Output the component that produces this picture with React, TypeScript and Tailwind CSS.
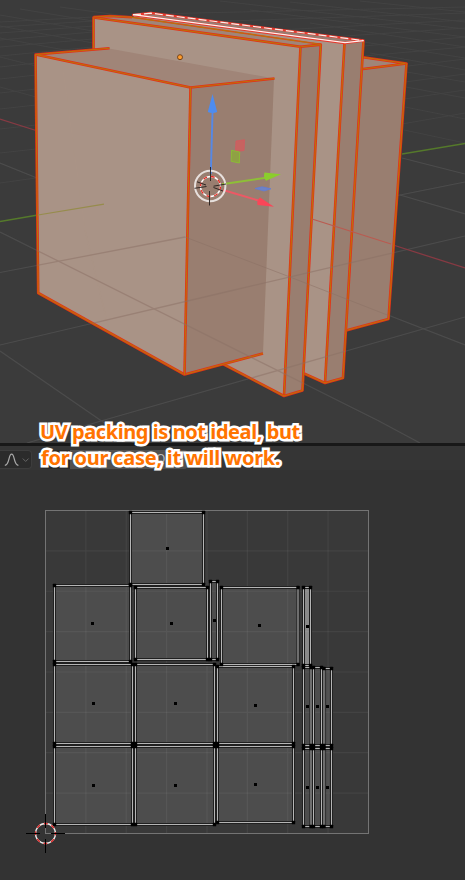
import React from "react";

type Pt = [number, number];
type Seg = [number, number, number, number];

const poly = (p: Pt[]) => p.map((q) => q.join(",")).join(" ");

const floorGrid: Seg[] = [
  [0, 232, 377, 420],
  [377, 420, 420, 443],
  [0, 272.5, 185, 237],
  [0, 345, 230, 291],
  [230, 291, 465, 236],
  [0, 351, 135, 444],
  [27, 443, 101, 421],
  [101, 421, 465, 317],
  [37, 178, 290, 277],
  [290, 277, 465, 345],
  [0, 163, 37, 178],
  [400, 195, 465, 214],
  [395, 196, 465, 182],
  [402, 158, 465, 174],
];

const farGrid: Seg[] = [
  [0, 183, 36, 178], [0, 153, 36, 149], [0, 129, 36, 125], [0, 109, 36, 105],
  [0, 93, 36, 89], [0, 79, 36, 75], [0, 67, 36, 63], [0, 56, 93, 47],
  [0, 47, 93, 39], [0, 40, 93, 32], [0, 33, 93, 26], [0, 27, 93, 21],
  [0, 22, 93, 17], [0, 87, 36, 97], [0, 57, 36, 66], [0, 38, 70, 51],
  [0, 26, 93, 43], [0, 15, 93, 31], [20, 9, 93, 21], [60, 7, 133, 17],
  [402, 124, 465, 113], [404, 99, 465, 90], [405, 82, 465, 74],
  [400, 67, 465, 59], [364, 56, 465, 47], [364, 46, 465, 37],
  [300, 39, 465, 28], [260, 31, 465, 20], [200, 22, 465, 13],
  [150, 14, 465, 7], [404, 130, 465, 143], [405, 107, 465, 119],
  [406, 87, 465, 98], [407, 72, 465, 82], [370, 53, 465, 70],
  [364, 42, 465, 58], [310, 23, 465, 47], [250, 10, 465, 37],
  [220, 1, 465, 29], [290, 2, 465, 22], [360, 1, 465, 12],
];

function Edge({ p }: { p: Pt[] }) {
  return (
    <g fill="none" strokeLinejoin="round">
      <polyline points={poly(p)} stroke="#e4301a" strokeWidth="2.6" />
      <polyline points={poly(p)} stroke="#bd7206" strokeWidth="1.1" />
    </g>
  );
}

function Lines({ items, color, width = 1 }: { items: Seg[]; color: string; width?: number }) {
  return (
    <g stroke={color} strokeWidth={width}>
      {items.map(([x1, y1, x2, y2], i) => (
        <line key={i} x1={x1} y1={y1} x2={x2} y2={y2} />
      ))}
    </g>
  );
}

function Scene() {
  return (
    <svg className="block h-full w-full" viewBox="0 0 465 443">
      <defs>
        <clipPath id="solid">
          <path d="M35 55L93 49V17L133 14L364 41V57L407 64L388 319L347 330L343 378L325 383L304 374L302 390L284 396L223 364L184 374L38 293Z" />
        </clipPath>
      </defs>
      <Lines items={farGrid} color="#434343" />
      <Lines items={floorGrid} color="#4c4c4c" width={1.2} />
      <path d="M0 119L36 130.5M390 244L465 268" stroke="#873a43" strokeWidth="1.3" />
      <path d="M0 221.5L38 215M402 154L465 143.5" stroke="#55792b" strokeWidth="1.3" />

      {/* rear box */}
      <polygon points="360,57 407,63.5 388.5,319 340,332" fill="#997e70" />
      <polygon points="360,57 407,63.5 360,69.5" fill="#a08578" />
      <Edge p={[[363, 57.3], [406.5, 63.5], [363, 69]]} />
      <Edge p={[[406.5, 63.5], [388.5, 319], [346, 330.5]]} />

      {/* second slab */}
      <polygon points="133,15 344.5,43 325,383 300,372" fill="#a99386" />
      <polygon points="344.5,43 363.5,41 343,378 325,383" fill="#997e70" />
      <Edge p={[[344.5, 43], [325, 383]]} />
      <Edge p={[[363.5, 41], [343, 378], [325, 383], [304, 373.5]]} />
      <polygon points="133,15 151,13 363.5,40.5 344.5,43" fill="#967d72" />
      <g fill="none">
        <path d="M133 15L151 13L363.5 40.5L344.5 43Z" stroke="#e8382c" strokeWidth="2.3" strokeLinejoin="round" />
        <path d="M133 14.7L345 42.6L363.5 40.7" stroke="#fff2f0" strokeWidth="1.3" />
        <path d="M133 14.7L151 13.2L363.5 40.6" stroke="#f8f0eb" strokeWidth="1.2" strokeDasharray="8 3" />
      </g>

      {/* first slab */}
      <polygon points="93.5,17 110,15.8 132,17 320.5,44 300.5,46.5" fill="#a08578" />
      <polygon points="93.5,17 300.5,46.5 284,396 184,343 93.5,100" fill="#a99386" />
      <polygon points="300.5,46.5 320.5,44.5 302.5,390 284,396" fill="#997e70" />
      <Edge p={[[93.5, 50], [93.5, 17.5], [300.5, 46.7], [284, 396]]} />
      <Edge p={[[93.5, 17], [110, 16], [132, 17.3]]} />
      <path d="M132 17.3L320.5 44.3" stroke="#d5501a" strokeWidth="1.5" />
      <path d="M132 17.3L320.5 44.3" stroke="#bd7206" strokeWidth="1" strokeDasharray="9 4" />
      <Edge p={[[300.5, 46.7], [320.8, 44.6], [302.5, 390.5], [284, 396], [222, 363.5]]} />

      {/* front box */}
      <polygon points="35,55 109,48.5 274,78.5 190.5,87.5" fill="#a08578" />
      <polygon points="35,55 190.5,87.5 184.5,374.5 38.5,293" fill="#a99386" />
      <polygon points="190.5,87.5 274,78.5 263,353 184.5,374.5" fill="#997e70" />
      <path d="M62 62L85 230L109 330" stroke="#b09686" strokeWidth=".5" fill="none" opacity=".35" />
      <Edge p={[[109.5, 48.2], [35.5, 54.5], [190.5, 87.5], [274.5, 78.5]]} />
      <Edge p={[[35.5, 55], [37.5, 232], [38.2, 293], [184.5, 374.5], [263, 353.5]]} />
      <Edge p={[[190.5, 87.5], [184.5, 374.5]]} />

      <g clipPath="url(#solid)" opacity=".5">
        <Lines items={floorGrid.slice(0, 8)} color="#8a7064" width={1.3} />
        <Lines items={[[185, 237, 290, 277], [290, 277, 400, 320]]} color="#8a7064" />
      </g>
      <path d="M38 215L104 204.2" stroke="#968c4c" strokeWidth="1.2" />
      <path d="M312 219L391 244" stroke="#ba5a50" strokeWidth="1.1" />
      <circle cx="180" cy="57.2" r="2.5" fill="#ff9d2c" stroke="#74431c" strokeWidth="1" />

      {/* transform gizmo */}
      <path d="M210.8 174L212.6 110" stroke="#5688e5" strokeWidth="1.9" />
      <path d="M212.5 94L217.2 112Q212.5 114 207.8 112Z" fill="#4d8cf0" />
      <path d="M222 184.2L266 177.7" stroke="#8ebf37" strokeWidth="2" />
      <path d="M264.5 172.5L281 174.3L266 180.8Q263 177 264.5 172.5Z" fill="#8bce2c" />
      <path d="M223 190L261 201.3" stroke="#ed5965" strokeWidth="2" />
      <path d="M260 197.5L274 206.8L257.5 205Q256.5 200 260 197.5Z" fill="#fa4658" />
      <path d="M255 188.5L262 186.8L271 188.8L264 191Z" fill="#6e82c4" stroke="#5d7bdc" strokeWidth=".7" />
      <path d="M236 141L244.5 139.8L244 150.5L235.5 151.5Z" fill="#c76360" stroke="#d65860" strokeWidth=".8" />
      <path d="M231.5 150.3L239.7 152L239.3 163L231.2 161.3Z" fill="#8fa144" stroke="#8abf31" strokeWidth=".9" />
      <circle cx="210.2" cy="186" r="15.2" fill="none" stroke="#e7e0dd" strokeWidth="2" />
      <circle cx="210.5" cy="186.5" r="10" fill="none" stroke="#fff" strokeWidth="1.3" />
      <circle cx="210.5" cy="186.5" r="10" fill="none" stroke="#e82c24" strokeWidth="1.3" strokeDasharray="3.93 3.93" />
      <path d="M210.5 167V181M209.5 191V205.5M194.5 188.3L206.5 186.5M197 181.8L206 185M213.5 186.2L226 184M213.5 187.5L223 191" stroke="#241d1b" strokeWidth=".9" />
    </svg>
  );
}

type Island = { box: [number, number, number, number]; dot: Pt; bright?: boolean };

const islands: Island[] = [
  { box: [130.5, 512.5, 203.5, 584.5], dot: [167.5, 548.5] },
  { box: [54.5, 585.5, 130.5, 661.5], dot: [92.5, 623.5] },
  { box: [135.5, 587.5, 207.5, 659.5], dot: [171.5, 623.5] },
  { box: [210.5, 581.5, 217.5, 659.5], dot: [214.5, 620.5] },
  { box: [221.5, 587.5, 298, 664.5], dot: [259.5, 625.5] },
  { box: [303.5, 587.5, 310.5, 665.5], dot: [307.5, 626.5], bright: true },
  { box: [54.5, 664.5, 132.5, 743.5], dot: [93.5, 703.5] },
  { box: [135.5, 664.5, 214.5, 743.5], dot: [175.5, 703.5] },
  { box: [217.5, 666.5, 293.5, 743.5], dot: [255.5, 705.5] },
  { box: [54.5, 746.5, 132.5, 824.5], dot: [93.5, 785.5] },
  { box: [135.5, 746.5, 214.5, 824.5], dot: [175.5, 785.5] },
  { box: [217.5, 746.5, 293.5, 822.5], dot: [255.5, 784.5] },
  { box: [303.5, 667.5, 311, 745.5], dot: [307.5, 706.5] },
  { box: [313.5, 667.5, 321.5, 745.5], dot: [317.5, 706.5] },
  { box: [324, 668.5, 331.5, 745.5], dot: [327.5, 706.5] },
  { box: [303.5, 748.5, 311, 826.5], dot: [307.5, 787.5] },
  { box: [313.5, 748.5, 321.5, 826.5], dot: [317.5, 787.5] },
  { box: [324, 748.5, 331.5, 826.5], dot: [327.5, 787.5] },
];

const ticks = [1, 2, 3, 4, 5, 6, 7];

function UvLayout() {
  return (
    <svg className="block h-full w-full" viewBox="0 470 465 410">
      <rect x="45.5" y="510.5" width="323" height="323" fill="#393939" />
      {islands.map(({ box: [a, b, c, d], bright }, i) => (
        <rect key={i} x={a} y={b} width={c - a} height={d - b} fill={bright ? "#8b8b8b" : "#4d4d4d"} />
      ))}
      <g stroke="#fff" strokeOpacity=".055" strokeWidth="1.2">
        {ticks.map((t) => (
          <path key={t} d={`M${45.5 + t * 40.37} 511V833M46 ${510.5 + t * 40.37}H368`} />
        ))}
      </g>
      <rect x="45.5" y="510.5" width="323" height="323" fill="none" stroke="#747474" />
      <g fill="none">
        {islands.map(({ box: [a, b, c, d] }, i) => (
          <rect key={i} x={a} y={b} width={c - a} height={d - b} stroke="#191919" strokeWidth="3" />
        ))}
        {islands.map(({ box: [a, b, c, d] }, i) => (
          <rect key={i} x={a} y={b} width={c - a} height={d - b} stroke="#b5b5b5" strokeWidth="1.1" />
        ))}
      </g>
      {islands.map(({ box: [a, b, c, d], dot }, i) => (
        <g key={i} fill="#000">
          {[[a, b], [c, b], [a, d], [c, d]].map(([x, y], j) => (
            <rect key={j} x={x - 1.7} y={y - 1.7} width="3.4" height="3.4" rx=".5" />
          ))}
          <rect x={dot[0] - 1.5} y={dot[1] - 1.5} width="3" height="3" />
        </g>
      ))}
      <circle cx="45.5" cy="833.5" r="10" fill="none" stroke="#eee" strokeWidth="1.3" />
      <circle cx="45.5" cy="833.5" r="10" fill="none" stroke="#e12727" strokeWidth="1.3" strokeDasharray="3.93 3.93" strokeDashoffset="2" />
      <path d="M45.5 814V828M45.5 839V853M26 833.5H40M51 833.5H65" stroke="#000" />
    </svg>
  );
}

export default function App() {
  return (
    <main className="relative flex h-[880px] w-[465px] flex-col overflow-hidden bg-[#333333] font-['Noto_Sans',sans-serif]">
      <section className="h-[443px] bg-[#3b3b3b]"><Scene /></section>
      <div className="h-[3px] bg-[#181818]" />
      <header className="flex h-6 items-center gap-2 bg-[#353535] pt-0.5">
        <div className="flex h-[19px] w-8 items-center rounded-r border border-l-0 border-[#3d3d3d] bg-[#2b2b2b]">
          <svg className="h-[19px] w-8" viewBox="0 0 32 19" fill="none" stroke="#aaa">
            <path d="M5 15.5C10 15.5 8.5 4 12 4S14 15.5 19 15.5" strokeWidth="1.2" />
            <path d="M23.5 8.5L26.5 11.5L29.5 8.5" stroke="#666" />
          </svg>
        </div>
        <div className="flex h-[19px] w-[148px] overflow-hidden rounded bg-[#2b2b2b] pl-[30px]">
          <div className="flex h-full grow items-center bg-[#505050] pl-[86px] text-[12px] text-[#bdbdbd]">Op</div>
        </div>
      </header>
      <section className="h-[410px]"><UvLayout /></section>
      <div className="absolute left-10 top-[419px] whitespace-nowrap text-[20px] font-bold leading-[26px] text-[#ff7300] [-webkit-text-stroke:5px_white] [paint-order:stroke_fill] [stroke-linejoin:round]">
        <p className="tracking-[-0.43px]">UV packing is not ideal, but</p>
        <p className="pl-px tracking-[-0.24px]">for our case, it will work.</p>
      </div>
    </main>
  );
}
